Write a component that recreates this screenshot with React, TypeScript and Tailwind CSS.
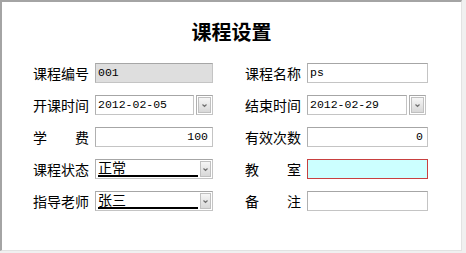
import React from "react";

const cjk = { fontFamily: '"Noto Sans CJK SC", "Noto Sans", sans-serif' };
const mono = { fontFamily: '"Liberation Mono", "Noto Sans CJK SC", monospace' };

function Label({ children, spread }: { children: string; spread?: boolean }) {
  if (spread) {
    const chars = children.split("");
    return (
      <div className="w-[56px] flex justify-between text-[14px] leading-none text-black" style={cjk}>
        <span>{chars[0]}</span>
        <span>{chars[1]}</span>
      </div>
    );
  }
  return (
    <div className="w-[56px] text-[14px] leading-none text-black whitespace-nowrap" style={cjk}>
      {children}
    </div>
  );
}

const boxBorder =
  "border border-[#c4c4c4] border-t-[#a6a6a6] border-l-[#b0b0b0]";

function TextBox({ value, w, right, bg, red }: { value?: string; w: string; right?: boolean; bg?: string; red?: boolean }) {
  return (
    <div
      className={`h-[20px] ${w} ${red ? "border border-[#c84040]" : boxBorder} ${bg ?? "bg-white"} flex items-center px-[2px] ${right ? "justify-end pr-[4px]" : ""} text-[11.5px] text-black`}
      style={mono}
    >
      {value}
    </div>
  );
}

function Arrow() {
  return (
    <svg width="7" height="5" viewBox="0 0 7 5">
      <path d="M1.5 1.5 L3.5 3.5 L5.5 1.5" stroke="#707070" strokeWidth="1.2" fill="none" />
    </svg>
  );
}

function DropBtn({ w }: { w: string }) {
  return (
    <div className={`${w} h-full flex items-center justify-center bg-gradient-to-b from-[#f6f6f6] to-[#d8d8d8] border border-[#c0c0c0]`}>
      <Arrow />
    </div>
  );
}

function DateBox({ value, w }: { value: string; w: string }) {
  return (
    <div className={`flex h-[20px] ${w} gap-[2px]`}>
      <div className={`flex-1 ${boxBorder} bg-white flex items-center px-[2px] text-[11.5px] text-black`} style={mono}>
        {value}
      </div>
      <div className={`w-[17px] ${boxBorder} bg-white p-[1px] flex`}>
        <DropBtn w="w-full" />
      </div>
    </div>
  );
}

function Combo({ value }: { value: string }) {
  return (
    <div className={`flex h-[20px] w-[118px] ${boxBorder} bg-white p-[1px]`}>
      <div className="flex-1 flex flex-col justify-end pl-[1px] pr-[2px]">
        <div className="text-[14px] leading-[15px] text-black border-b-2 border-black" style={cjk}>
          {value}
        </div>
      </div>
      <DropBtn w="w-[11px]" />
    </div>
  );
}

export default function App() {
  return (
    <div className="w-[466px] h-[253px] bg-[#f0f0f0]">
      <div className="w-[462px] h-[251px] bg-white border-l-2 border-t-2 border-[#a4a4a4] border-r border-b border-r-[#e2e2e2] border-b-[#e2e2e2]">
        <div className="pt-[16px] h-[44px] text-center text-[20px] leading-[28px] font-bold text-black" style={cjk}>
          课程设置
        </div>
        <div className="mt-[17px] pl-[31px] flex flex-col gap-[12px]">
          <div className="flex items-center h-[20px]">
            <Label>课程编号</Label>
            <div className="ml-[6px]"><TextBox value="001" w="w-[118px]" bg="bg-[#dedede]" /></div>
            <div className="ml-[32px]"><Label>课程名称</Label></div>
            <div className="ml-[6px]"><TextBox value="ps" w="w-[121px]" /></div>
          </div>
          <div className="flex items-center h-[20px]">
            <Label>开课时间</Label>
            <div className="ml-[6px]"><DateBox value="2012-02-05" w="w-[118px]" /></div>
            <div className="ml-[32px]"><Label>结束时间</Label></div>
            <div className="ml-[6px]"><DateBox value="2012-02-29" w="w-[119px]" /></div>
          </div>
          <div className="flex items-center h-[20px]">
            <Label spread>学费</Label>
            <div className="ml-[6px]"><TextBox value="100" w="w-[118px]" right /></div>
            <div className="ml-[32px]"><Label>有效次数</Label></div>
            <div className="ml-[6px]"><TextBox value="0" w="w-[121px]" right /></div>
          </div>
          <div className="flex items-center h-[20px]">
            <Label>课程状态</Label>
            <div className="ml-[6px]"><Combo value="正常" /></div>
            <div className="ml-[32px]"><Label spread>教室</Label></div>
            <div className="ml-[6px]"><TextBox w="w-[121px]" bg="bg-[#ccffff]" red /></div>
          </div>
          <div className="flex items-center h-[20px]">
            <Label>指导老师</Label>
            <div className="ml-[6px]"><Combo value="张三" /></div>
            <div className="ml-[32px]"><Label spread>备注</Label></div>
            <div className="ml-[6px]"><TextBox w="w-[121px]" /></div>
          </div>
        </div>
      </div>
    </div>
  );
}
